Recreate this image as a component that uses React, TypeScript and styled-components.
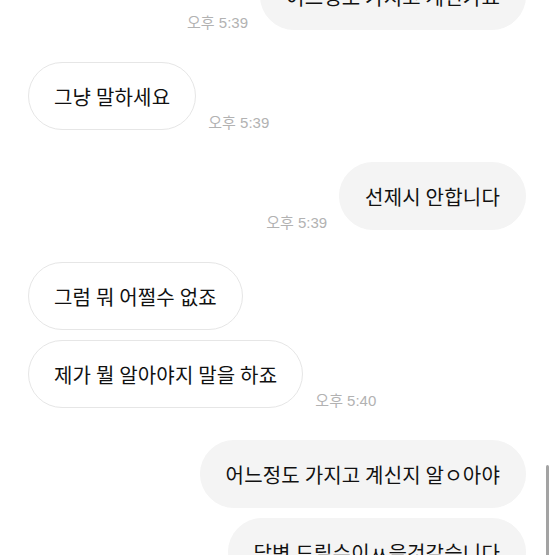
import React from 'react';
import styled, { createGlobalStyle } from 'styled-components';

const GlobalStyle = createGlobalStyle`
  html, body {
    margin: 0;
    padding: 0;
    background: #ffffff;
    overflow: hidden;
  }
  body {
    font-family: "Noto Sans CJK KR", "Noto Sans", sans-serif;
  }
`;

type Side = 'me' | 'them';

interface IMessage {
  side: Side;
  text: string;
  time?: string;
  last?: boolean;
}

const messages: IMessage[] = [
  { side: 'me', text: '어느정도 가지고 계신가요', time: '오후 5:39', last: true },
  { side: 'them', text: '그냥 말하세요', time: '오후 5:39', last: true },
  { side: 'me', text: '선제시 안합니다', time: '오후 5:39', last: true },
  { side: 'them', text: '그럼 뭐 어쩔수 없죠' },
  { side: 'them', text: '제가 뭘 알아야지 말을 하죠', time: '오후 5:40', last: true },
  { side: 'me', text: '어느정도 가지고 계신지 알ㅇ아야' },
  { side: 'me', text: '답변 드릴수이ㅆ을것같습니다' },
];

const Screen = styled.div`
  position: relative;
  width: 555px;
  height: 555px;
  overflow: hidden;
`;

const Thread = styled.div`
  display: flex;
  flex-direction: column;
  padding: 0 29px 0 28px;
  margin-top: -38px;
`;

const Row = styled.div<{ $side: Side; $last?: boolean }>`
  display: flex;
  align-items: flex-end;
  justify-content: ${(p) => (p.$side === 'me' ? 'flex-end' : 'flex-start')};
  gap: 12px;
  margin-bottom: ${(p) => (p.$last ? '32px' : '10px')};
`;

const Bubble = styled.div<{ $side: Side }>`
  box-sizing: border-box;
  height: 68px;
  display: flex;
  align-items: center;
  padding: 0 25px;
  border-radius: 34px;
  font-size: 20px;
  font-weight: 400;
  letter-spacing: 0.2px;
  color: #111111;
  white-space: nowrap;
  background: ${(p) => (p.$side === 'me' ? '#f4f4f4' : '#ffffff')};
  border: 1px solid ${(p) => (p.$side === 'me' ? '#f4f4f4' : '#e6e6e6')};
`;

const Time = styled.span`
  font-family: "Liberation Sans", "Noto Sans CJK KR", sans-serif;
  font-size: 15px;
  color: #b2b2b2;
  line-height: 17px;
  margin-bottom: -1px;
  white-space: nowrap;
`;

const ScrollThumb = styled.div`
  position: absolute;
  right: 6px;
  top: 465px;
  width: 3px;
  height: 120px;
  border-radius: 2px;
  background: #a3a3a3;
`;

function Message({ side, text, time, last }: IMessage) {
  const stamp = time ? <Time>{time}</Time> : null;
  return (
    <Row $side={side} $last={last}>
      {side === 'me' && stamp}
      <Bubble $side={side}>{text}</Bubble>
      {side === 'them' && stamp}
    </Row>
  );
}

export default function App() {
  return (
    <Screen>
      <GlobalStyle />
      <Thread>
        {messages.map((m, i) => (
          <Message key={i} {...m} />
        ))}
      </Thread>
      <ScrollThumb />
    </Screen>
  );
}
